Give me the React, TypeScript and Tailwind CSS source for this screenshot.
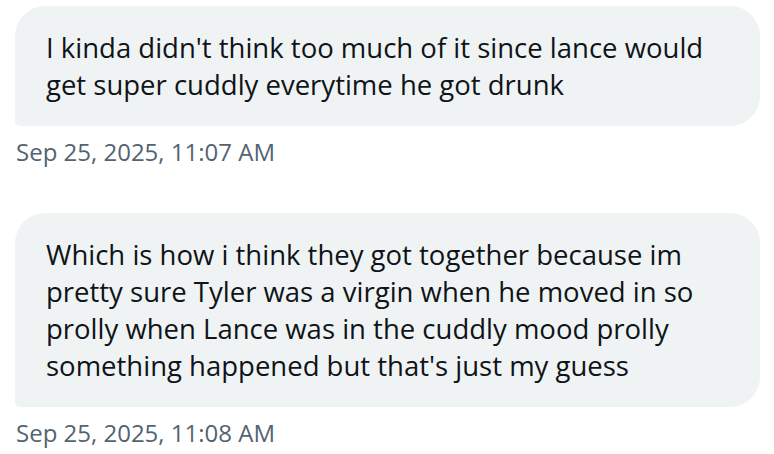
const messages = [
  {
    text: "I kinda didn't think too much of it since lance would get super cuddly everytime he got drunk",
    time: 'Sep 25, 2025, 11:07 AM',
  },
  {
    text: "Which is how i think they got together because im pretty sure Tyler was a virgin when he moved in so prolly when Lance was in the cuddly mood prolly something happened but that's just my guess",
    time: 'Sep 25, 2025, 11:08 AM',
  },
];

export default function App() {
  return (
    <div
      className="h-[454px] w-[774px] overflow-hidden bg-white pl-[15px] pr-[14px] pt-[6px]"
      style={{ fontFamily: '"Open Sans", "Noto Sans", sans-serif' }}
    >
      {messages.map((m, i) => (
        <div key={i} className={i > 0 ? 'mt-[46px]' : ''}>
          <div className="rounded-[30px] rounded-bl-[5px] bg-[#eff3f4] py-[23px] pl-[31px] pr-[30px] text-[27.5px] leading-[37px] text-[#0f1419]">
            {m.text}
          </div>
          <div className="mt-[11px] pl-px text-[24px] leading-[30px] text-[#536471]">{m.time}</div>
        </div>
      ))}
    </div>
  );
}
